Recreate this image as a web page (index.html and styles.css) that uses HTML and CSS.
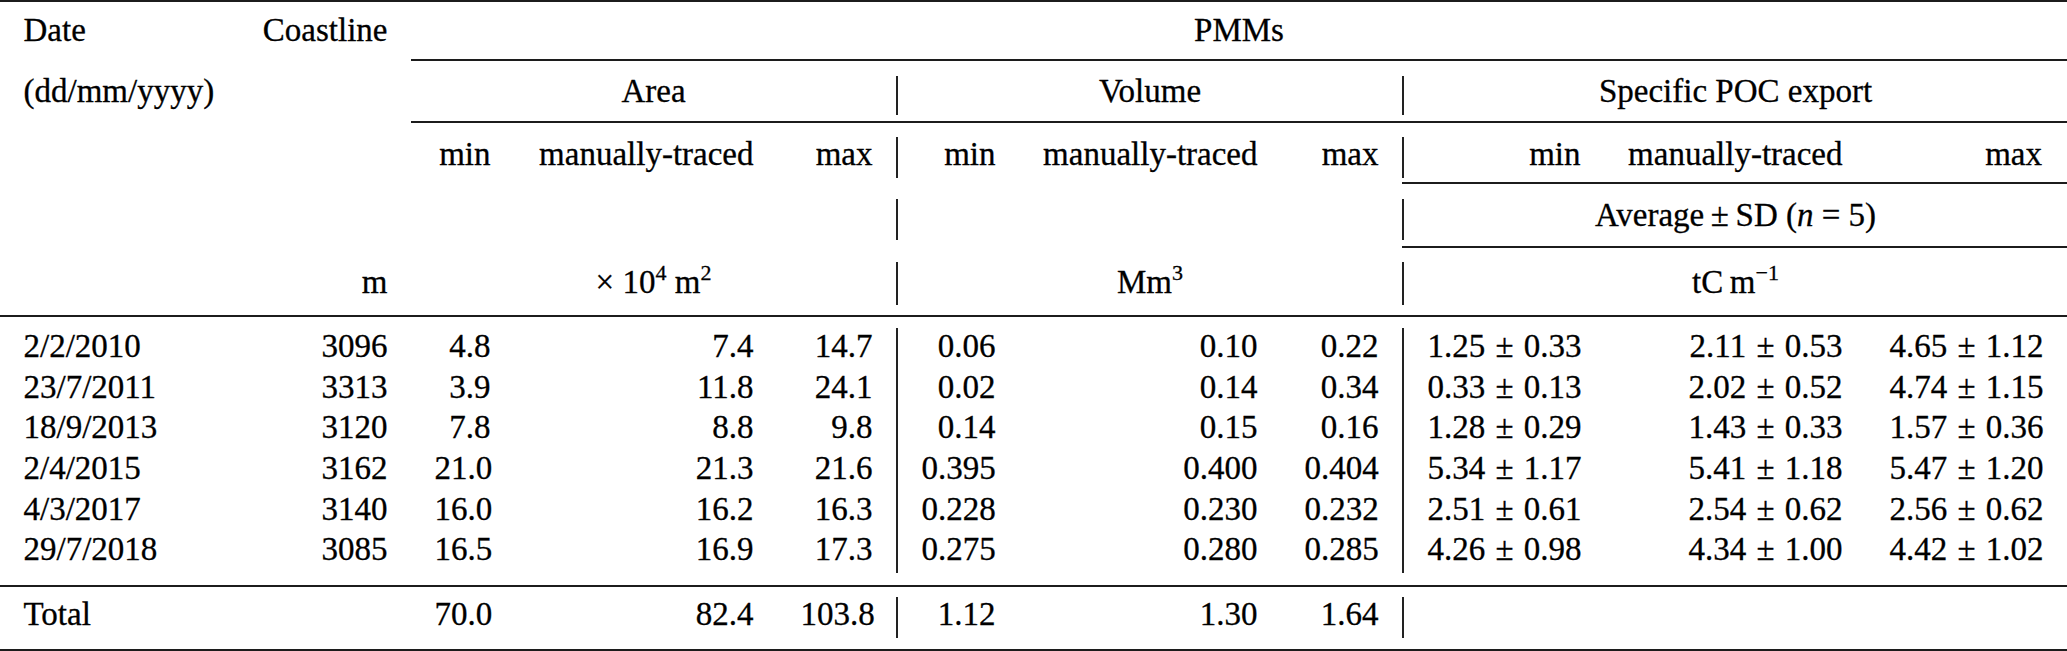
FILE: index.html
```html
<!DOCTYPE html>
<html lang="en">
<head>
<meta charset="utf-8">
<title>PMMs table</title>
<link rel="stylesheet" href="styles.css">
</head>
<body>
<div class="table">
  <div class="row r1">
    <div class="c l">Date</div>
    <div class="c">Coastline</div>
    <div class="c ctr pmm rule">PMMs</div>
  </div>
  <div class="row r2">
    <div class="c l">(dd/mm/yyyy)</div>
    <div class="c"></div>
    <div class="c ctr span3 rule">Area</div>
    <div class="sep rule"><span class="vl"></span></div>
    <div class="c ctr span3 rule">Volume</div>
    <div class="sep rule"><span class="vl"></span></div>
    <div class="c ctr span3 rule">Specific POC export</div>
  </div>
  <div class="row r3">
    <div class="c"></div>
    <div class="c"></div>
    <div class="c">min</div>
    <div class="c">manually-traced</div>
    <div class="c">max</div>
    <div class="sep"><span class="vl"></span></div>
    <div class="c">min</div>
    <div class="c">manually-traced</div>
    <div class="c">max</div>
    <div class="sep rule"><span class="vl"></span></div>
    <div class="c rule">min</div>
    <div class="c rule">manually-traced</div>
    <div class="c e rule">max</div>
  </div>
  <div class="row r4">
    <div class="c span5"></div>
    <div class="sep"><span class="vl"></span></div>
    <div class="c span3"></div>
    <div class="sep rule"><span class="vl"></span></div>
    <div class="c ctr span3 rule">Average&thinsp;±&thinsp;SD (<var>n</var> = 5)</div>
  </div>
  <div class="row r5">
    <div class="c"></div>
    <div class="c">m</div>
    <div class="c ctr span3">× 10<sup>4</sup> m<sup>2</sup></div>
    <div class="sep"><span class="vl"></span></div>
    <div class="c ctr span3">Mm<sup>3</sup></div>
    <div class="sep"><span class="vl"></span></div>
    <div class="c ctr span3">tC&thinsp;m<sup>−1</sup></div>
  </div>
  <div class="row body">
    <div class="sep s1"><span class="vl"></span></div>
    <div class="sep s2"><span class="vl"></span></div>

    <div class="c l">2/2/2010</div><div class="c">3096</div><div class="c">4.8</div><div class="c">7.4</div><div class="c">14.7</div>
    <div class="c">0.06</div><div class="c">0.10</div><div class="c">0.22</div>
    <div class="c">1.25 ± 0.33</div><div class="c">2.11 ± 0.53</div><div class="c e">4.65 ± 1.12</div>

    <div class="c l">23/7/2011</div><div class="c">3313</div><div class="c">3.9</div><div class="c">11.8</div><div class="c">24.1</div>
    <div class="c">0.02</div><div class="c">0.14</div><div class="c">0.34</div>
    <div class="c">0.33 ± 0.13</div><div class="c">2.02 ± 0.52</div><div class="c e">4.74 ± 1.15</div>

    <div class="c l">18/9/2013</div><div class="c">3120</div><div class="c">7.8</div><div class="c">8.8</div><div class="c">9.8</div>
    <div class="c">0.14</div><div class="c">0.15</div><div class="c">0.16</div>
    <div class="c">1.28 ± 0.29</div><div class="c">1.43 ± 0.33</div><div class="c e">1.57 ± 0.36</div>

    <div class="c l">2/4/2015</div><div class="c">3162</div><div class="c">21.0</div><div class="c">21.3</div><div class="c">21.6</div>
    <div class="c">0.395</div><div class="c">0.400</div><div class="c">0.404</div>
    <div class="c">5.34 ± 1.17</div><div class="c">5.41 ± 1.18</div><div class="c e">5.47 ± 1.20</div>

    <div class="c l">4/3/2017</div><div class="c">3140</div><div class="c">16.0</div><div class="c">16.2</div><div class="c">16.3</div>
    <div class="c">0.228</div><div class="c">0.230</div><div class="c">0.232</div>
    <div class="c">2.51 ± 0.61</div><div class="c">2.54 ± 0.62</div><div class="c e">2.56 ± 0.62</div>

    <div class="c l">29/7/2018</div><div class="c">3085</div><div class="c">16.5</div><div class="c">16.9</div><div class="c">17.3</div>
    <div class="c">0.275</div><div class="c">0.280</div><div class="c">0.285</div>
    <div class="c">4.26 ± 0.98</div><div class="c">4.34 ± 1.00</div><div class="c e">4.42 ± 1.02</div>
  </div>
  <div class="row total">
    <div class="c l">Total</div>
    <div class="c"></div>
    <div class="c">70.0</div>
    <div class="c">82.4</div>
    <div class="c">103.8</div>
    <div class="sep"><span class="vl"></span></div>
    <div class="c">1.12</div>
    <div class="c">1.30</div>
    <div class="c">1.64</div>
    <div class="sep"><span class="vl"></span></div>
    <div class="c span3"></div>
  </div>
</div>
</body>
</html>
```

FILE: styles.css
```css
* {
  box-sizing: border-box;
  margin: 0;
  padding: 0;
}

:root {
  --cols: 239px 172px 103px 263px 119px 2px 121px 262px 121px 2px 200px 262px 201px;
  --rule: #1c1c1c;
  --line: 40.7px;
}

html,
body {
  background: #ffffff;
}

body {
  margin: 0;
  font-family: "Liberation Serif", "DejaVu Serif", serif;
  font-size: 33px;
  line-height: var(--line);
  color: #000000;
  -webkit-text-stroke: 0.3px #000000;
}

.table {
  width: 2067px;
  border-top: 2px solid var(--rule);
  border-bottom: 2px solid var(--rule);
}

.row {
  display: grid;
  grid-template-columns: var(--cols);
}

.c {
  padding: 0 23.5px;
  text-align: right;
  white-space: nowrap;
}

.c.l {
  text-align: left;
}

.c.ctr {
  text-align: center;
}

.c.e {
  padding-right: 25px;
}

.pmm {
  grid-column: 3 / -1;
}

.span3 {
  grid-column: span 3;
}

.span5 {
  grid-column: span 5;
}

.rule {
  border-bottom: 2px solid var(--rule);
}

.sep {
  display: flex;
  justify-content: center;
}

.vl {
  display: block;
  width: 2px;
  background: #222222;
}

sup {
  font-size: 22px;
  line-height: 0;
  vertical-align: 13px;
}

var {
  font-style: italic;
}

/* header rows */
.r1 {
  height: 59px;
}
.r1 .c {
  padding-top: 8px;
}

.r2 {
  height: 62px;
}
.r2 .c {
  padding-top: 10px;
}
.r2 .sep {
  padding: 15px 0 6px;
}

.r3 {
  height: 61px;
}
.r3 .c {
  padding-top: 11px;
}
.r3 .sep {
  padding: 14px 0 6px;
}
.r3 .sep.rule {
  padding-bottom: 4px;
}

.r4 {
  height: 64px;
}
.r4 .c {
  padding-top: 11px;
}
.r4 .sep {
  padding: 15px 0 8px;
}
.r4 .sep.rule {
  padding-bottom: 6px;
}

.r5 {
  height: 69px;
  border-bottom: 2px solid var(--rule);
}
.r5 .c {
  padding-top: 13.5px;
}
.r5 .sep {
  padding: 14px 0 10px;
}

/* body */
.body {
  height: 270px;
  padding-top: 9px;
  border-bottom: 2px solid var(--rule);
  grid-template-rows: repeat(6, var(--line));
  align-content: start;
  word-spacing: 2px;
}

.body .sep {
  grid-row: 1 / span 6;
  margin: 2px 0 -3px;
}

.body .s1 {
  grid-column: 6;
}

.body .s2 {
  grid-column: 10;
}

/* total */
.total {
  height: 62px;
}
.total .c {
  padding-top: 6.5px;
}
.total .sep {
  padding: 10px 0 11px;
}
```
